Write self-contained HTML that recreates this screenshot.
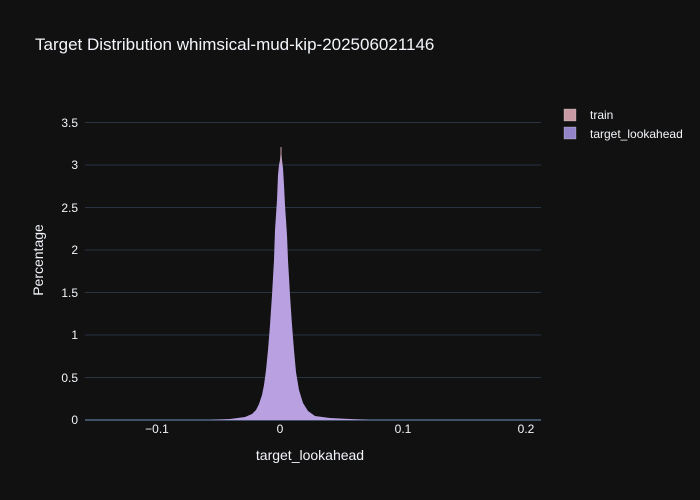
<!DOCTYPE html>
<html><head><style>
html,body{margin:0;padding:0;background:#111111;}
body{width:700px;height:500px;overflow:hidden;font-family:"Liberation Sans",sans-serif;}
</style></head><body>
<svg width="700" height="500" xmlns="http://www.w3.org/2000/svg" style="display:block">
<rect width="700" height="500" fill="#111111"/>
<text x="35" y="50" fill="#f2f5fa" font-size="17" font-family="Liberation Sans, sans-serif">Target Distribution whimsical-mud-kip-202506021146</text>
<g stroke="#283442" stroke-width="1">
<line x1="85" x2="541" y1="377.5" y2="377.5"/>
<line x1="85" x2="541" y1="335" y2="335"/>
<line x1="85" x2="541" y1="292.5" y2="292.5"/>
<line x1="85" x2="541" y1="250" y2="250"/>
<line x1="85" x2="541" y1="207.5" y2="207.5"/>
<line x1="85" x2="541" y1="165" y2="165"/>
<line x1="85" x2="541" y1="122.5" y2="122.5"/>
</g>
<line x1="85" x2="541" y1="420" y2="420" stroke="#506784" stroke-width="1.5"/>
<polygon fill="#b9a0e0" points="210,420 230,419 245,417 252,414 256,410 259,404 262,395 264,385 266,370 268,350 270,325 272,295 274,260 275,230 277,200 278,175 279,165 280,160 281,148 282,160 283,168 284,185 285,205 287,235 288,260 290,295 292,325 294,350 296,372 299,390 303,403 308,411 315,416 330,418 370,420"/>
<line x1="281" x2="281" y1="147" y2="165" stroke="#c8a0a8" stroke-width="1"/>
<g fill="#f2f5fa" font-size="12" text-anchor="end" font-family="Liberation Sans, sans-serif">
<text x="78" y="424">0</text>
<text x="78" y="382">0.5</text>
<text x="78" y="339">1</text>
<text x="78" y="297">1.5</text>
<text x="78" y="254">2</text>
<text x="78" y="212">2.5</text>
<text x="78" y="169">3</text>
<text x="78" y="127">3.5</text>
</g>
<g fill="#f2f5fa" font-size="12" text-anchor="middle" font-family="Liberation Sans, sans-serif">
<text x="157" y="433">−0.1</text>
<text x="280" y="433">0</text>
<text x="403" y="433">0.1</text>
<text x="526" y="433">0.2</text>
</g>
<text x="310" y="460" fill="#f2f5fa" font-size="14" text-anchor="middle" font-family="Liberation Sans, sans-serif">target_lookahead</text>
<text transform="translate(43,260) rotate(-90)" fill="#f2f5fa" font-size="14" text-anchor="middle" font-family="Liberation Sans, sans-serif">Percentage</text>
<rect x="564" y="109" width="12" height="12" fill="#c89aa3" stroke="#ddd" stroke-width="0.3"/>
<rect x="564" y="127" width="12" height="12" fill="#9384c9" stroke="#ddd" stroke-width="0.3"/>
<g fill="#f2f5fa" font-size="12" font-family="Liberation Sans, sans-serif">
<text x="590" y="119">train</text>
<text x="590" y="138">target_lookahead</text>
</g>
</svg>
</body></html>
